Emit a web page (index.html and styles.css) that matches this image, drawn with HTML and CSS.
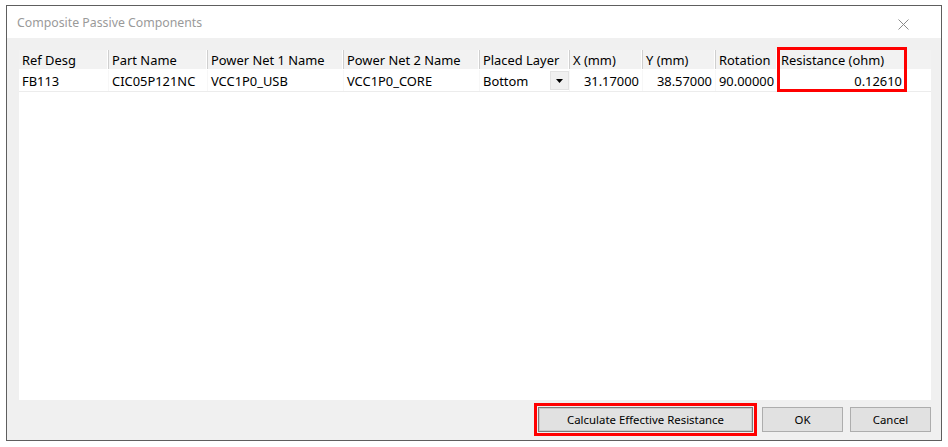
FILE: index.html
```html
<!DOCTYPE html>
<html>
<head>
<meta charset="utf-8">
<link rel="stylesheet" href="styles.css">
</head>
<body>
<div class="window">
  <div class="titlebar">
    <span class="title">Composite Passive Components</span>
    <svg class="close" width="11" height="11" viewBox="0 0 11 11"><path d="M0.5 0.5 L10.5 10.5 M10.5 0.5 L0.5 10.5" stroke="#8a8a8a" stroke-width="1" fill="none"/></svg>
  </div>
  <div class="body">
    <div class="grid">
      <div class="row head">
        <div class="cell c1">Ref Desg</div>
        <div class="cell c2">Part Name</div>
        <div class="cell c3">Power Net 1 Name</div>
        <div class="cell c4">Power Net 2 Name</div>
        <div class="cell c5">Placed Layer</div>
        <div class="cell c6">X (mm)</div>
        <div class="cell c7">Y (mm)</div>
        <div class="cell c8">Rotation</div>
        <div class="cell c9">Resistance (ohm)</div>
        <div class="filler"></div>
      </div>
      <div class="row data">
        <div class="cell c1">FB113</div>
        <div class="cell c2">CIC05P121NC</div>
        <div class="cell c3">VCC1P0_USB</div>
        <div class="cell c4">VCC1P0_CORE</div>
        <div class="cell c5 combo"><span>Bottom</span><span class="dropbtn"><svg width="7" height="4" viewBox="0 0 7 4"><path d="M0 0 H7 L3.5 4 Z" fill="#000"/></svg></span></div>
        <div class="cell c6 num">31.17000</div>
        <div class="cell c7 num">38.57000</div>
        <div class="cell c8 num">90.00000</div>
        <div class="cell c9 num">0.12610</div>
        <div class="filler"></div>
      </div>
      <div class="highlight"></div>
    </div>
    <div class="buttons">
      <button class="btn calc">Calculate Effective Resistance</button>
      <button class="btn ok">OK</button>
      <button class="btn cancel">Cancel</button>
    </div>
  </div>
</div>
</body>
</html>
```

FILE: styles.css
```css
* { box-sizing: border-box; }
html, body { margin: 0; padding: 0; background: #fff; }
body {
  font-family: "Noto Sans", "Open Sans", sans-serif;
  font-size: 12px;
  color: #000;
}
.window {
  margin: 5px 0 0 6px;
  width: 936px;
  height: 436px;
  border: 1px solid #5e5e5e;
  background: #f0f0f0;
  display: flex;
  flex-direction: column;
}
.titlebar {
  height: 32px;
  background: #fff;
  display: flex;
  align-items: center;
  justify-content: space-between;
  padding: 0 32px 0 10px;
  flex: none;
}
.title {
  color: #9a9a9a;
  font-size: 12.3px;
  margin-top: 1px;
}
.close { display: block; margin-top: 4px; }
.body {
  flex: 1;
  padding: 12px 10px 7px 12px;
  display: flex;
  flex-direction: column;
}
.grid {
  position: relative;
  width: 912px;
  height: 350px;
  background: #fff;
  font-size: 12.9px;
}
.row { display: flex; }
.head {
  height: 20px;
  background: #f2f2f2;
  border-bottom: 1px solid #fff;
}
.head .cell {
  border-right: 1px solid #cfcfcf;
  box-shadow: inset -1px 0 0 #fff;
  line-height: 19px;
  padding-top: 1px;
}
.data {
  height: 22px;
  border-bottom: 1px solid #ececec;
}
.data .cell {
  line-height: 21px;
  padding-top: 1px;
  border-right: 1px solid #f7f7f7;
}
.cell {
  flex: none;
  padding: 0 3px 0 3px;
  white-space: nowrap;
  overflow: hidden;
}
.filler { flex: 1; }
.c1 { width: 90px; }
.c2 { width: 99px; }
.c3 { width: 136px; }
.c4 { width: 136px; }
.c5 { width: 90px; }
.c6 { width: 73px; }
.c7 { width: 73px; }
.c8 { width: 62px; }
.c9 { width: 128px; }
.num { text-align: right; padding-right: 3px; }
.data .combo {
  display: flex;
  align-items: center;
  justify-content: space-between;
  padding-right: 0;
  padding-top: 0;
}
.combo span:first-child { padding-top: 1px; }
.dropbtn {
  width: 19px;
  height: 19px;
  background: #f0f0f0;
  border: 1px solid #e2e2e2;
  display: flex;
  align-items: center;
  justify-content: center;
}
.dropbtn svg { display: block; }
.highlight {
  position: absolute;
  left: 758px;
  top: -3px;
  width: 130px;
  height: 45px;
  border: 3px solid #ff0000;
}
.buttons {
  display: flex;
  justify-content: flex-end;
  margin-top: 7px;
}
.btn {
  font-family: inherit;
  font-size: 11.4px;
  color: #000;
  height: 25px;
  background: #e1e1e1;
  border: 1px solid #adadad;
  padding: 0;
  border-radius: 0;
}
.calc {
  width: 215px;
  border: 1px solid #7a7a7a;
  box-shadow: inset 0 0 0 1px #c8c8c8;
  outline: 3px solid #ff0000;
  outline-offset: 1px;
}
.ok { width: 81px; margin-left: 9px; }
.cancel { width: 81px; margin-left: 7px; }
```
